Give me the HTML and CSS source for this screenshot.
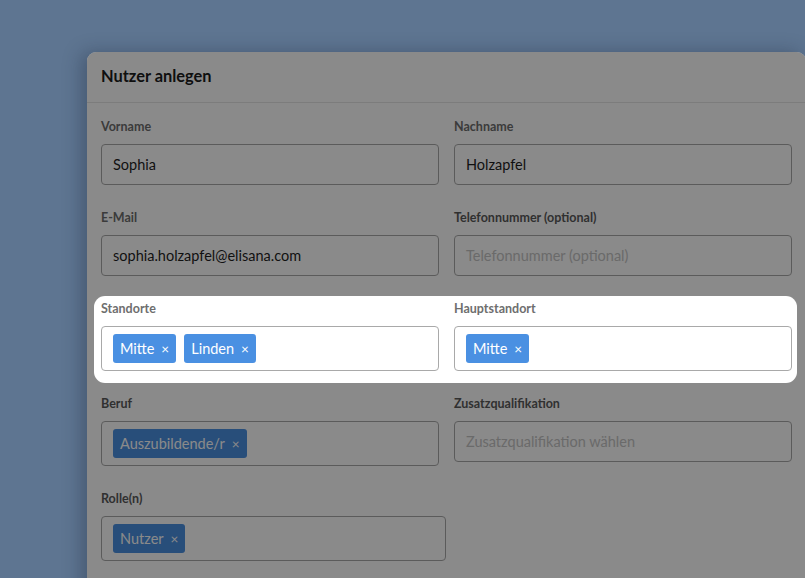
FILE: index.html
```html
<!DOCTYPE html>
<html lang="de">
<head>
<meta charset="utf-8">
<title>Nutzer anlegen</title>
<link rel="stylesheet" href="styles.css">
</head>
<body>
<div class="modal">
  <div class="modal-header">
    <h1 class="modal-title">Nutzer anlegen</h1>
  </div>
  <div class="modal-body">
    <div class="row">
      <div class="field">
        <label class="label">Vorname</label>
        <div class="input">Sophia</div>
      </div>
      <div class="field">
        <label class="label">Nachname</label>
        <div class="input">Holzapfel</div>
      </div>
    </div>
    <div class="row">
      <div class="field">
        <label class="label">E-Mail</label>
        <div class="input">sophia.holzapfel@elisana.com</div>
      </div>
      <div class="field">
        <label class="label label-dark">Telefonnummer (optional)</label>
        <div class="input placeholder">Telefonnummer (optional)</div>
      </div>
    </div>
    <div class="row row-highlight">
      <div class="spotlight"></div>
      <div class="field">
        <label class="label">Standorte</label>
        <div class="tag-input">
          <span class="tag">Mitte<span class="tag-x">×</span></span>
          <span class="tag">Linden<span class="tag-x">×</span></span>
        </div>
      </div>
      <div class="field">
        <label class="label">Hauptstandort</label>
        <div class="tag-input">
          <span class="tag">Mitte<span class="tag-x">×</span></span>
        </div>
      </div>
    </div>
    <div class="row">
      <div class="field">
        <label class="label label-dark">Beruf</label>
        <div class="tag-input">
          <span class="tag">Auszubildende/r<span class="tag-x">×</span></span>
        </div>
      </div>
      <div class="field">
        <label class="label label-dark">Zusatzqualifikation</label>
        <div class="input placeholder">Zusatzqualifikation wählen</div>
      </div>
    </div>
    <div class="row">
      <div class="field field-wide">
        <label class="label label-dark">Rolle(n)</label>
        <div class="tag-input">
          <span class="tag">Nutzer<span class="tag-x">×</span></span>
        </div>
      </div>
    </div>
  </div>
</div>
</body>
</html>
```
FILE: styles.css
```css
html, body {
  margin: 0;
  padding: 0;
  height: 100%;
}

body {
  background: #5e7591;
  font-family: Lato, "Open Sans", sans-serif;
  overflow: hidden;
}

.modal {
  margin: 52px 0 0 87px;
  width: 719px;
  height: 620px;
  background: #ffffff;
  border-radius: 9px 9px 0 0;
  overflow: hidden;
  position: relative;
  box-shadow: -6px 0 18px rgba(30, 40, 60, 0.35);
}

.modal-header {
  box-sizing: border-box;
  height: 51px;
  border-bottom: 1px solid #e6e6e6;
  padding: 0 14px 3px 14px;
  display: flex;
  align-items: center;
}

.modal-title {
  margin: 0;
  font-size: 16.4px;
  font-weight: 700;
  color: #1c1c1c;
}

.modal-body {
  padding: 15px 14px 0 14px;
  display: flex;
  flex-direction: column;
  gap: 24px;
}

.row {
  display: grid;
  grid-template-columns: 338px 338px;
  column-gap: 15px;
  align-items: start;
}

.row-highlight {
  position: relative;
}

.spotlight {
  position: absolute;
  top: -4px;
  left: -7px;
  right: -5px;
  bottom: -12px;
  border-radius: 11px;
  box-shadow: 0 0 0 2000px rgba(0, 0, 0, 0.46);
  pointer-events: none;
  z-index: 10;
}

.field {
  display: flex;
  flex-direction: column;
  gap: 9px;
  min-width: 0;
}

.field-wide {
  width: 345px;
}

.label {
  display: block;
  padding-top: 1px;
  font-size: 12.5px;
  line-height: 16px;
  font-weight: 700;
  color: #6e6e6e;
}

.label-dark {
  color: #5a5a5a;
}

.input {
  box-sizing: border-box;
  height: 41px;
  border: 1px solid #a9a9a9;
  border-radius: 4px;
  padding: 0 11px;
  display: flex;
  align-items: center;
  font-size: 14.5px;
  color: #1f1f1f;
}

.placeholder {
  color: #c4c4c4;
}

.tag-input {
  box-sizing: border-box;
  height: 45px;
  border: 1px solid #a9a9a9;
  border-radius: 4px;
  padding: 0 11px;
  display: flex;
  align-items: center;
  gap: 8px;
}

.tag {
  display: inline-flex;
  align-items: center;
  height: 29px;
  padding: 0 7px 0 7px;
  background: #4a90e2;
  border-radius: 3px;
  color: #ffffff;
  font-size: 14.5px;
  white-space: pre;
}

.tag-x {
  margin-left: 7px;
  font-size: 13.5px;
}
```
